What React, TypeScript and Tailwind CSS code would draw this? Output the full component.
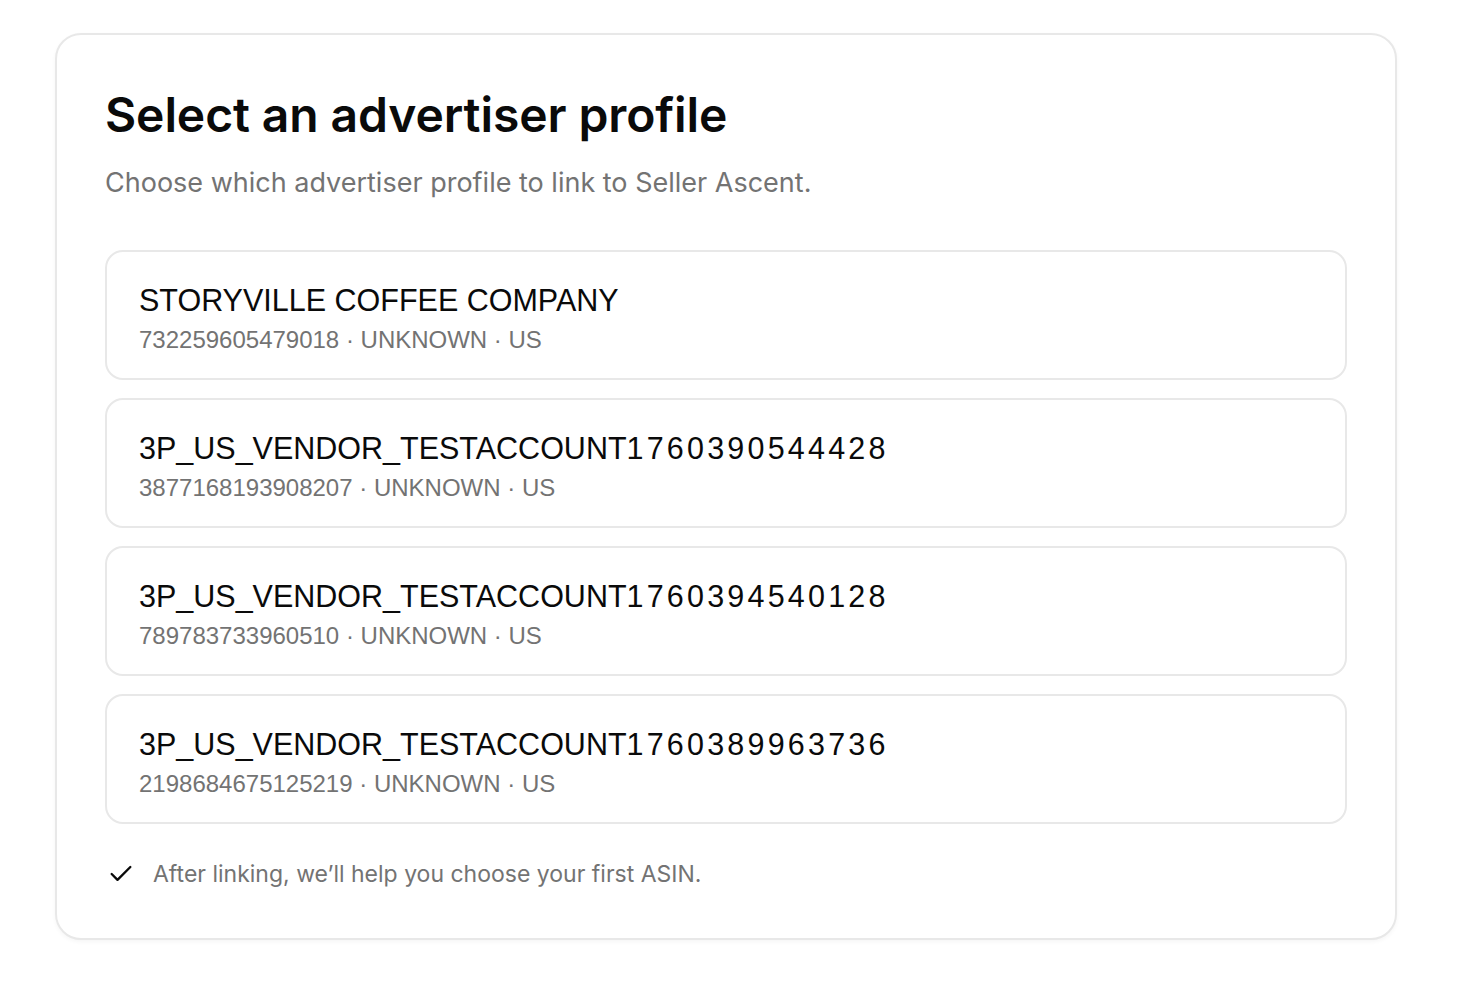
import React from 'react';
import { Check } from 'lucide-react';

interface Profile {
  name: string;
  id: string;
  type: string;
  country: string;
}

const profiles: Profile[] = [
  { name: 'STORYVILLE COFFEE COMPANY', id: '732259605479018', type: 'UNKNOWN', country: 'US' },
  { name: '3P_US_VENDOR_TESTACCOUNT1760390544428', id: '3877168193908207', type: 'UNKNOWN', country: 'US' },
  { name: '3P_US_VENDOR_TESTACCOUNT1760394540128', id: '789783733960510', type: 'UNKNOWN', country: 'US' },
  { name: '3P_US_VENDOR_TESTACCOUNT1760389963736', id: '2198684675125219', type: 'UNKNOWN', country: 'US' },
];

// digits in the reference font run wider than Arial's, so give number runs a little tracking
const renderName = (name: string) =>
  name.split(/(\d{4,})/).map((part, i) =>
    /^\d+$/.test(part) ? (
      <span key={i} className="tracking-[3.2px]">{part}</span>
    ) : (
      <span key={i}>{part}</span>
    )
  );

const App: React.FC = () => {
  return (
    <div className="min-h-screen bg-white pt-[33px] pl-[55px] pr-[63px] font-['Inter',sans-serif]">
      <div className="w-[1342px] rounded-[26px] border-2 border-[#e8e8e8] bg-white px-[48px] pt-[52px] pb-[49px] shadow-[0_2px_4px_rgba(0,0,0,0.04)]">
        <h1 className="text-[48px] font-semibold leading-[56px] tracking-[-0.1px] text-[#0a0a0a]">
          Select an advertiser profile
        </h1>
        <p className="mt-[23px] text-[27px] leading-[34px] text-[#737373]">
          Choose which advertiser profile to link to Seller Ascent.
        </p>

        <div className="mt-[50px] flex flex-col gap-[18px]">
          {profiles.map((p) => (
            <button
              key={p.id}
              className="flex h-[130px] w-full flex-col justify-center rounded-[18px] border-2 border-[#e8e8e8] bg-white px-[32px] pt-[6px] text-left font-['Liberation_Sans',Arial,sans-serif]"
            >
              <div className="text-[30.5px] leading-[38px] text-[#0a0a0a]">{renderName(p.name)}</div>
              <div className="mt-[6px] text-[24px] leading-[30px] text-[#737373]">
                {p.id} · {p.type} · {p.country}
              </div>
            </button>
          ))}
        </div>

        <div className="mt-[35px] flex items-center gap-[18px]">
          <Check className="ml-[2px] h-[28px] w-[28px] text-[#0a0a0a]" strokeWidth={2} />
          <span className="text-[23px] leading-[30px] text-[#737373]">
            After linking, we’ll help you choose your first ASIN.
          </span>
        </div>
      </div>
    </div>
  );
};

export default App;
